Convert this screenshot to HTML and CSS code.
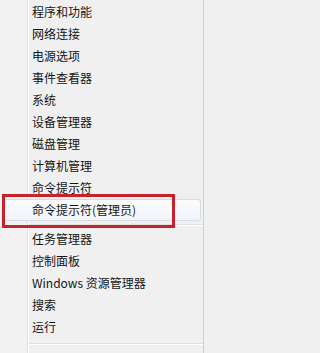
FILE: index.html
```html
<!DOCTYPE html>
<html lang="zh-CN">
<head>
<meta charset="utf-8">
<link rel="stylesheet" href="styles.css">
</head>
<body>
<div class="menu">
  <div class="item">程序和功能</div>
  <div class="item">网络连接</div>
  <div class="item">电源选项</div>
  <div class="item">事件查看器</div>
  <div class="item">系统</div>
  <div class="item">设备管理器</div>
  <div class="item">磁盘管理</div>
  <div class="item">计算机管理</div>
  <div class="item">命令提示符</div>
  <div class="item hover">命令提示符(管理员)</div>
  <div class="sep"></div>
  <div class="item">任务管理器</div>
  <div class="item">控制面板</div>
  <div class="item">Windows 资源管理器</div>
  <div class="item">搜索</div>
  <div class="item">运行</div>
  <div class="sep last"></div>
  <div class="mark"></div>
</div>
</body>
</html>
```
FILE: styles.css
```css
html, body {
  margin: 0;
  padding: 0;
  background: #f0f0f0;
}
.menu {
  position: relative;
  width: 204px;
  height: 353px;
  box-sizing: border-box;
  padding-top: 1px;
  border-right: 1px solid #c9d0d8;
  background: linear-gradient(to right, #f2f2f2 0 27px, #e1e2e2 27px 28px, #ffffff 28px 29px, #f0f0f0 29px);
  font-family: "Noto Sans CJK SC", "Noto Sans", sans-serif;
  font-size: 12px;
  color: #151515;
  overflow: hidden;
}
.item {
  height: 22px;
  line-height: 22px;
  padding-left: 32px;
  white-space: nowrap;
}
.item.hover {
  margin: 0 2px 0 3px;
  padding-left: 28px;
  height: 20px;
  line-height: 20px;
  border: 1px solid #d3dde9;
  border-radius: 3px;
  background: linear-gradient(#fbfcfd, #f1f4f8);
}
.sep {
  margin: 3px 0 2px 29px;
  border-top: 1px solid #e0e0e0;
  border-bottom: 1px solid #ffffff;
}
.sep.last {
  margin-top: 5px;
}
.mark {
  position: absolute;
  left: 2px;
  top: 194px;
  width: 173px;
  height: 34px;
  box-sizing: border-box;
  border: 3px solid #c5222c;
}
```
